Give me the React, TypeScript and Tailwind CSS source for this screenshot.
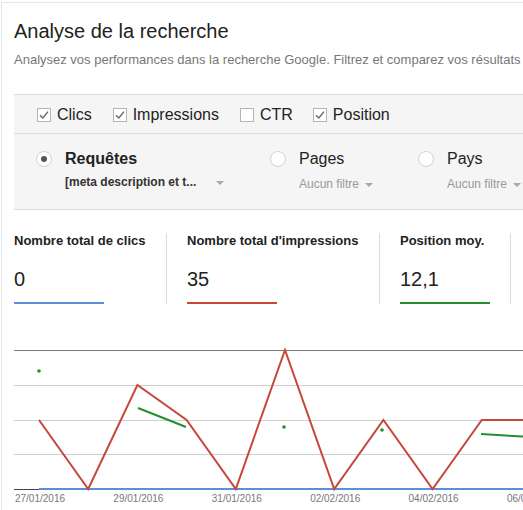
import React from 'react'

const font = { fontFamily: '"Liberation Sans", Arial, sans-serif' }

function Check({ checked }: { checked: boolean }) {
  return (
    <svg width="14" height="14" viewBox="0 0 14 14" className="shrink-0">
      <rect x="0.5" y="0.5" width="13" height="13" fill="#fff" stroke="#b5b5b5" />
      {checked && <path d="M3 7.2 L5.8 10 L11 3.6" fill="none" stroke="#666" strokeWidth="1.4" />}
    </svg>
  )
}

function Radio({ on }: { on: boolean }) {
  return (
    <div className="w-[16px] h-[16px] rounded-full border border-[#d2d2d2] bg-white flex items-center justify-center shrink-0">
      {on && <div className="w-[6px] h-[6px] rounded-full bg-[#555]" />}
    </div>
  )
}

function Caret() {
  return <span className="inline-block ml-[6px] w-0 h-0 border-l-[4px] border-r-[4px] border-t-[4px] border-l-transparent border-r-transparent border-t-[#aaa] align-middle" />
}

const metrics = [
  { label: 'Nombre total de clics', value: '0', color: 'bg-[#5a8fdb]', w: 'w-[152px]' },
  { label: "Nombre total d'impressions", value: '35', color: 'bg-[#c5483b]', w: 'w-[213px]' },
  { label: 'Position moy.', value: '12,1', color: 'bg-[#23902b]', w: 'w-[131px]' },
]

const xs = Array.from({ length: 11 }, (_, i) => 39 + i * 49.2)
const red = [420, 489, 385, 420, 489, 350, 489, 420, 489, 420, 420]
const dates = ['27/01/2016', '29/01/2016', '31/01/2016', '02/02/2016', '04/02/2016', '06/02/2016']

function Chart() {
  const o = 340
  const pts = red.map((y, i) => `${xs[i]},${y - o}`).join(' ')
  return (
    <svg width="523" height="170" className="block">
      {[385, 420, 454].map((y) => (
        <line key={y} x1="14" x2="523" y1={y - o + 0.5} y2={y - o + 0.5} stroke="#cfcfcf" />
      ))}
      <line x1="14" x2="523" y1={350 - o + 0.5} y2={350 - o + 0.5} stroke="#7a7a7a" />
      <line x1="14" x2="39" y1={489 - o + 0.5} y2={489 - o + 0.5} stroke="#444" />
      <line x1="39" x2="523" y1={489 - o} y2={489 - o} stroke="#5a8fdb" strokeWidth="2" />
      <polyline points={pts} fill="none" stroke="#c5483b" strokeWidth="2" strokeLinejoin="miter" />
      <g stroke="#23902b" strokeWidth="2" fill="#23902b">
        <line x1={138} y1={408 - o} x2={186} y2={427 - o} />
        <line x1={481} y1={434 - o} x2={530} y2={437 - o} />
        <circle cx={39} cy={371 - o} r="1.8" stroke="none" />
        <circle cx={284} cy={427 - o} r="1.8" stroke="none" />
        <circle cx={382} cy={430 - o} r="1.8" stroke="none" />
      </g>
      {dates.map((d, i) => (
        <text key={d} x={40 + i * 98.4} y={502 - o} textAnchor="middle" fontSize="10" fill="#777" style={font}>
          {d}
        </text>
      ))}
    </svg>
  )
}

export default function App() {
  return (
    <div className="w-[523px] h-[510px] overflow-hidden bg-white" style={font}>
      <div className="ml-[1px] mt-[2px] border-l border-t border-[#e6e6e6] h-[508px]">
        <div className="pl-[12px] pt-[16px]">
          <h1 className="text-[20px] leading-[24px] text-[#222] whitespace-nowrap">Analyse de la recherche</h1>
          <p className="mt-[9px] text-[13px] leading-[16px] text-[#777] whitespace-nowrap">
            Analysez vos performances dans la recherche Google. Filtrez et comparez vos résultats pour mieux comprendre
          </p>
          <div className="mt-[26px] w-[600px] bg-[#f5f5f5] border-t border-b border-[#dcdcdc]">
            <div className="h-[39px] pt-[2px] pl-[23px] flex items-center text-[16px] text-[#222] border-b border-[#dcdcdc]">
              <div className="flex items-center gap-[6px] mr-[21px]"><Check checked /><span>Clics</span></div>
              <div className="flex items-center gap-[6px] mr-[21px]"><Check checked /><span>Impressions</span></div>
              <div className="flex items-center gap-[6px] mr-[20px]"><Check checked={false} /><span>CTR</span></div>
              <div className="flex items-center gap-[6px]"><Check checked /><span>Position</span></div>
            </div>
            <div className="h-[75px] pl-[22px] pt-[15px] flex">
              <div className="w-[234px] flex gap-[13px]">
                <div className="mt-[2px]"><Radio on /></div>
                <div>
                  <div className="text-[16px] leading-[20px] font-bold text-[#222]">Requêtes</div>
                  <div className="mt-[5px] text-[12px] leading-[16px] font-bold text-[#333] whitespace-nowrap">
                    [meta description et t...<span className="ml-[14px]"><Caret /></span>
                  </div>
                </div>
              </div>
              <div className="w-[148px] flex gap-[13px]">
                <div className="mt-[2px]"><Radio on={false} /></div>
                <div>
                  <div className="text-[16px] leading-[20px] text-[#222]">Pages</div>
                  <div className="mt-[7px] text-[12px] leading-[16px] text-[#999] whitespace-nowrap">Aucun filtre<Caret /></div>
                </div>
              </div>
              <div className="flex gap-[13px]">
                <div className="mt-[2px]"><Radio on={false} /></div>
                <div>
                  <div className="text-[16px] leading-[20px] text-[#222]">Pays</div>
                  <div className="mt-[7px] text-[12px] leading-[16px] text-[#999] whitespace-nowrap">Aucun filtre<Caret /></div>
                </div>
              </div>
            </div>
          </div>
          <div className="flex pt-[23px]">
            {metrics.map((m, i) => (
              <div key={m.label} className={`${m.w} ${i > 0 ? 'pl-[20px] border-l border-[#dcdcdc]' : ''} pr-[1px]`}>
                <div className="text-[13px] leading-[16px] font-bold text-[#222] whitespace-nowrap">{m.label}</div>
                <div className="mt-[18px] text-[20px] leading-[24px] text-[#222]">{m.value}</div>
                <div className={`mt-[11px] w-[90px] h-[2px] ${m.color}`} />
              </div>
            ))}
            <div className="border-l border-[#dcdcdc]" />
          </div>
        </div>
        <div className="mt-[36px] -ml-[2px]">
          <Chart />
        </div>
      </div>
    </div>
  )
}
